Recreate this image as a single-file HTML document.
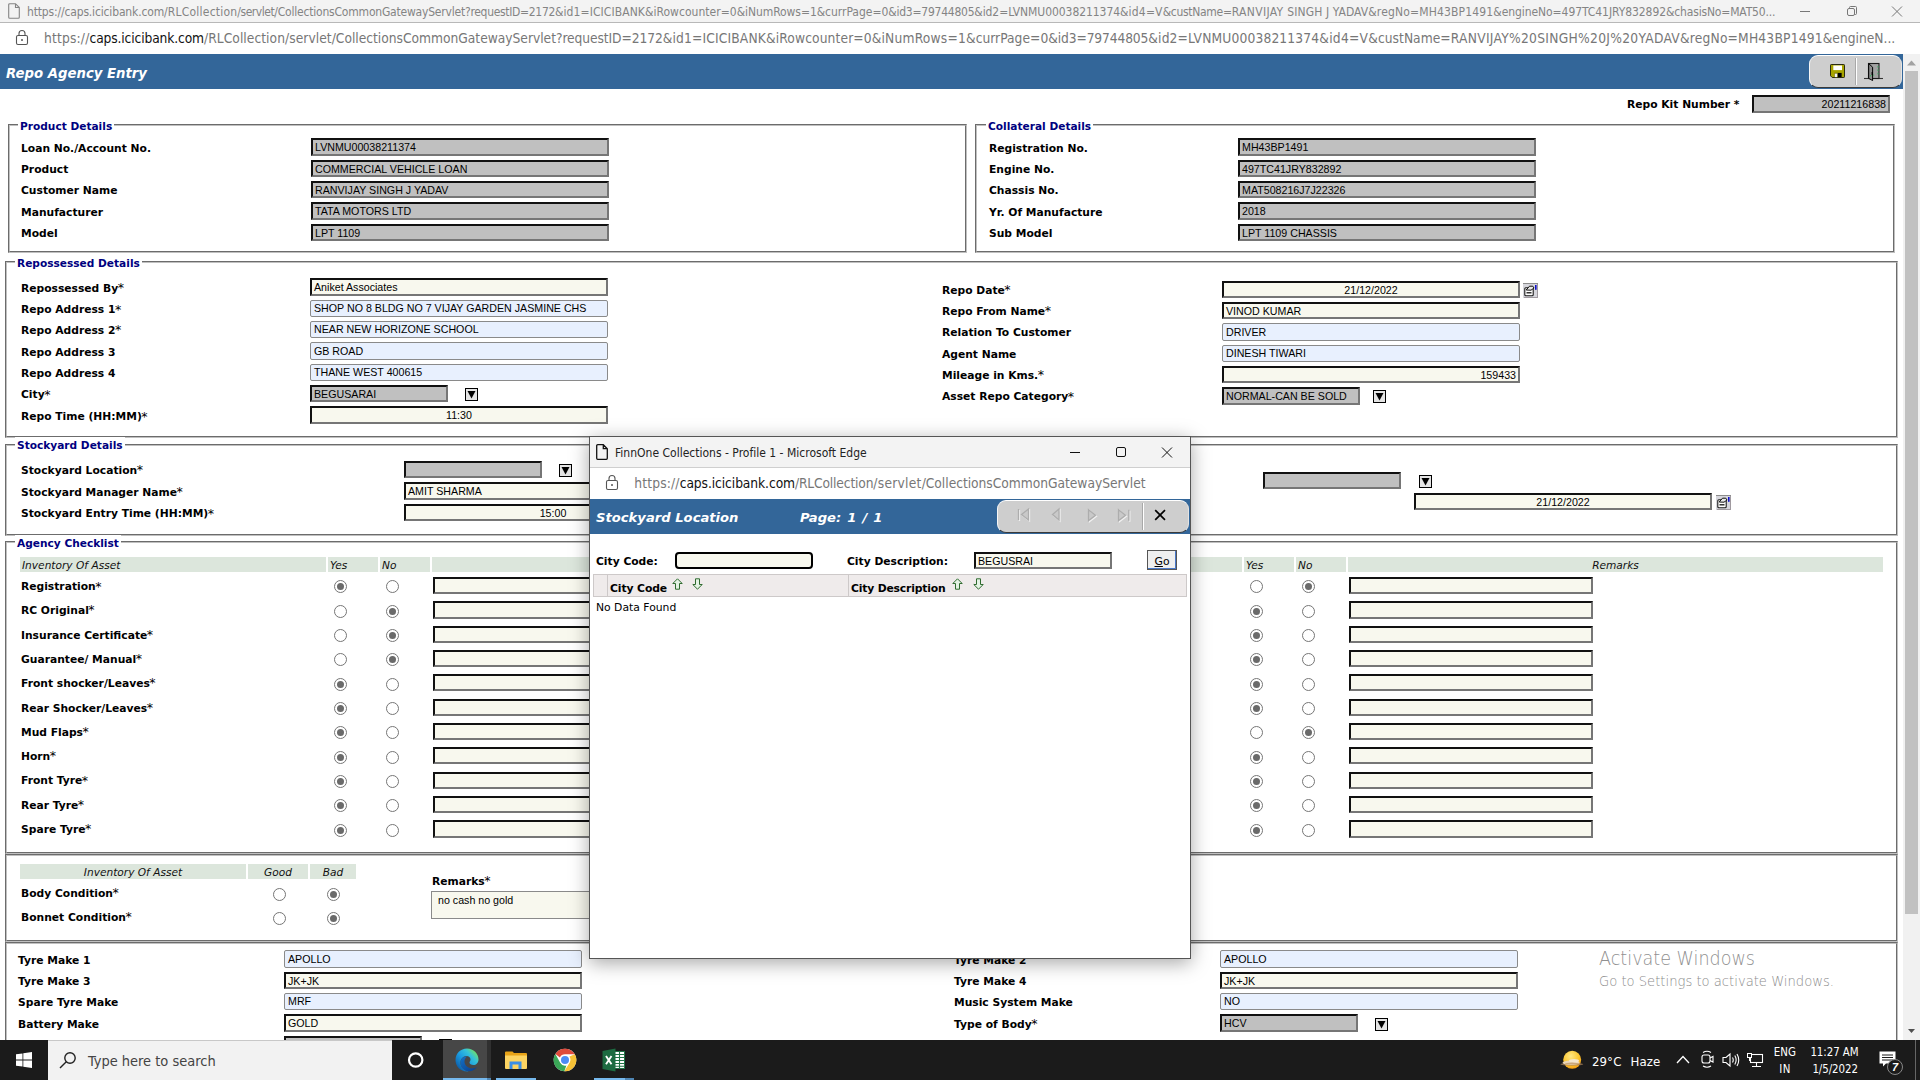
<!DOCTYPE html>
<html lang="en"><head><meta charset="utf-8"><title>Repo Agency Entry</title>
<style>
html,body{margin:0;padding:0;background:#fff}
body{width:1920px;height:1080px;overflow:hidden;position:relative;font-family:"DejaVu Sans","Liberation Sans",sans-serif}
#page{position:absolute;left:0;top:0;width:1920px;height:1040px;overflow:hidden}
.abs{position:absolute}
div{box-sizing:border-box}
.lb{position:absolute;white-space:nowrap;font:bold 10.72px/20px "DejaVu Sans",sans-serif;color:#000}
.st{font-style:normal;font-weight:normal;font-size:12.600px;line-height:0;margin-left:-.5px;position:relative;top:.6px}
.lg{position:absolute;white-space:nowrap;font:bold 10.600px/16px "DejaVu Sans",sans-serif;color:#000080;background:#fff;padding:0 2px}
.fs{position:absolute;box-sizing:content-box;border:2px groove #c0c0c0}
.hdr{position:absolute;background:#336699;color:#fff;font:italic bold 13.250px "DejaVu Sans",sans-serif;white-space:nowrap}
.pill{position:absolute;background:#cecece;border:1px solid;border-color:#fff #e4e4e4 #3a3a3a #f6f6f6;border-radius:9px}
.in{position:absolute;white-space:nowrap;overflow:hidden;font:10.670px/15px "Liberation Sans",sans-serif;color:#000;padding:0 2px}
.in.g{background:#c0c0c0;border:2px solid;border-color:#111 #767676 #767676 #111}
.in.y{background:#f8f8ee;border:2px solid;border-color:#111 #767676 #767676 #111}
.in.b{background:#e8f0fe;border:1px solid #8a8a8a;border-radius:2px;padding:0 3px;line-height:16px}
.in.f{background:#f8f8ee;border:2px solid #000;border-radius:4px}
.dd{position:absolute;width:13px;height:13px;border:1px solid #000;background:#e4e4e4}
.dd svg{display:block}
.rd{position:absolute;width:13px;height:13px;border:1px solid #767676;border-radius:50%;background:#fff}
.rd.on::after{content:"";position:absolute;left:2px;top:2px;width:7px;height:7px;border-radius:50%;background:#6a6a6a}
.hd{position:absolute;background:#dce6dc;font:italic 10.600px/15px "DejaVu Sans",sans-serif;color:#111;padding:1px 2px 0;white-space:nowrap}
.ta{position:absolute;background:#f8f8ee;border:1px solid #8a8a8a;font:10.670px/13px "Liberation Sans",sans-serif;padding:2px 6px;white-space:nowrap;overflow:hidden}
.aw1{position:absolute;font:19.500px "Liberation Sans",sans-serif;color:#a0a0a0;white-space:nowrap}
.aw2{position:absolute;font:14.200px "Liberation Sans",sans-serif;color:#a8a8a8;white-space:nowrap}
.wt{position:absolute;font:12px "Liberation Sans",sans-serif;white-space:nowrap}
.url{position:absolute;font:14.500px "Liberation Sans",sans-serif;color:#777;white-space:nowrap}
.url b{font-weight:normal;color:#111}
.pop{position:absolute;background:#fff;border:1px solid #555;box-shadow:0 4px 18px rgba(0,0,0,.35)}
.pop .hdr{}
.go{position:absolute;background:#efefef;border:1px solid #555;box-shadow:inset -1px -1px 0 #4a78c8;font:10.800px/22px "DejaVu Sans",sans-serif;text-align:center;color:#000;overflow:hidden}
.th{position:absolute;background:#efebeb;border:1px solid #cdc9c9;font:bold 10.800px/14px "DejaVu Sans",sans-serif;white-space:nowrap}
.nd{position:absolute;font:10.800px/14px "DejaVu Sans",sans-serif;white-space:nowrap}
.tb{position:absolute;color:#fff;font-family:"Liberation Sans",sans-serif;white-space:nowrap;line-height:17px}
</style></head>
<body>
<div id="page">
<div class="hdr" style="left:0;top:54px;width:1903px;height:35px"><span style="position:absolute;left:6px;top:1.5px;line-height:35px">Repo Agency Entry</span></div>
<div class="pill" style="left:1809px;top:55px;width:93px;height:33px"></div>
<div class="abs" style="left:1855px;top:58px;width:1px;height:27px;background:#a8a8a8"></div><div class="abs" style="left:1856px;top:58px;width:1px;height:27px;background:#fff"></div>
<svg class="abs" style="left:1830px;top:64px" width="15" height="14" viewBox="0 0 15 14"><path d="M.5 1.200a.7 .7 0 0 1 .7-.7H13.800a.7 .7 0 0 1 .7 .7V12.800a.7 .7 0 0 1-.7 .7H2.200L.5 11.800Z" fill="#a8a400" stroke="#2a2a10" stroke-width="1"/><rect x="3.300" y="1.500" width="8.700" height="4.600" fill="#fff"/><rect x="4.500" y="8.800" width="7.300" height="4.400" fill="#6a6800"/><rect x="8" y="9" width="3.500" height="4.200" fill="#000"/><rect x="4.800" y="9.600" width="2.400" height="3.500" fill="#f4f4f4"/></svg>
<svg class="abs" style="left:1864px;top:62px" width="19" height="19" viewBox="0 0 19 19"><path d="M0 16.500H19" stroke="#333" stroke-width="1.100"/><rect x="4.500" y="1.500" width="10.500" height="15" fill="#a2a2a2" stroke="#1a1a1a" stroke-width="1.100"/><path d="M4.700 1.600L8.600 5.200V18.500L4.700 16.400Z" fill="#8e8e8e" stroke="#000" stroke-width="1"/><path d="M8.300 10v3" stroke="#000" stroke-width="1.400"/><path d="M14 4v9" stroke="#2fae5a" stroke-width=".9" stroke-dasharray="1.600 1.800"/><circle cx="6.700" cy="13.800" r=".7" fill="#2fae5a"/><circle cx="9.700" cy="13" r=".6" fill="#2fae5a"/></svg>
<div class="lb" style="left:1627px;top:95px">Repo Kit Number *</div>
<div class="in g" style="left:1752px;top:95px;width:138px;height:18px;text-align:right;">20211216838</div>
<div class="fs" style="left:8px;top:124px;width:955px;height:125px"></div>
<div class="lg" style="left:18px;top:117.5px">Product Details</div>
<div class="lb" style="left:21px;top:138.7px;">Loan No./Account No.</div>
<div class="in g" style="left:311px;top:138px;width:298px;height:18px;">LVNMU00038211374</div>
<div class="lb" style="left:21px;top:159.5px;">Product</div>
<div class="in g" style="left:311px;top:160px;width:298px;height:17px;">COMMERCIAL VEHICLE LOAN</div>
<div class="lb" style="left:21px;top:180.5px;">Customer Name</div>
<div class="in g" style="left:311px;top:181px;width:298px;height:17px;">RANVIJAY SINGH J YADAV</div>
<div class="lb" style="left:21px;top:203.0px;">Manufacturer</div>
<div class="in g" style="left:311px;top:202px;width:298px;height:18px;">TATA MOTORS LTD</div>
<div class="lb" style="left:21px;top:224.0px;">Model</div>
<div class="in g" style="left:311px;top:224px;width:298px;height:17px;">LPT 1109</div>
<div class="fs" style="left:975px;top:124px;width:916px;height:125px"></div>
<div class="lg" style="left:986px;top:117.5px">Collateral Details</div>
<div class="lb" style="left:989px;top:138.7px;">Registration No.</div>
<div class="in g" style="left:1238px;top:138px;width:298px;height:18px;">MH43BP1491</div>
<div class="lb" style="left:989px;top:159.5px;">Engine No.</div>
<div class="in g" style="left:1238px;top:160px;width:298px;height:17px;">497TC41JRY832892</div>
<div class="lb" style="left:989px;top:180.5px;">Chassis No.</div>
<div class="in g" style="left:1238px;top:181px;width:298px;height:17px;">MAT508216J7J22326</div>
<div class="lb" style="left:989px;top:203.0px;">Yr. Of Manufacture</div>
<div class="in g" style="left:1238px;top:202px;width:298px;height:18px;">2018</div>
<div class="lb" style="left:989px;top:224.0px;">Sub Model</div>
<div class="in g" style="left:1238px;top:224px;width:298px;height:17px;">LPT 1109 CHASSIS</div>
<div class="fs" style="left:5px;top:261px;width:1889px;height:173px"></div>
<div class="lg" style="left:15px;top:254.5px">Repossessed Details</div>
<div class="lb" style="left:21px;top:278.7px;">Repossessed By<i class="st">*</i></div>
<div class="lb" style="left:21px;top:300.0px;">Repo Address 1<i class="st">*</i></div>
<div class="lb" style="left:21px;top:320.8px;">Repo Address 2<i class="st">*</i></div>
<div class="lb" style="left:21px;top:342.8px;">Repo Address 3</div>
<div class="lb" style="left:21px;top:363.7px;">Repo Address 4</div>
<div class="lb" style="left:21px;top:385.0px;">City<i class="st">*</i></div>
<div class="lb" style="left:21px;top:407.0px;">Repo Time (HH:MM)<i class="st">*</i></div>
<div class="in y" style="left:310px;top:278px;width:298px;height:18px;">Aniket Associates</div>
<div class="in b" style="left:310px;top:300px;width:298px;height:17px;line-height:15px;">SHOP NO 8 BLDG NO 7 VIJAY GARDEN JASMINE CHS</div>
<div class="in b" style="left:310px;top:321px;width:298px;height:17px;line-height:15px;">NEAR NEW HORIZONE SCHOOL</div>
<div class="in b" style="left:310px;top:342px;width:298px;height:18px;line-height:16px;">GB ROAD</div>
<div class="in b" style="left:310px;top:364px;width:298px;height:17px;line-height:15px;">THANE WEST 400615</div>
<div class="in g" style="left:310px;top:385px;width:138px;height:17px;">BEGUSARAI</div>
<div class="dd" style="left:465px;top:388px"><svg width="11" height="11" viewBox="0 0 11 11"><path d="M1.5 2 H9.5 L5.5 9.5 Z" fill="#000"/></svg></div>
<div class="in y" style="left:310px;top:406px;width:298px;height:18px;text-align:center;">11:30</div>
<div class="lb" style="left:942px;top:280.5px;">Repo Date<i class="st">*</i></div>
<div class="lb" style="left:942px;top:301.5px;">Repo From Name<i class="st">*</i></div>
<div class="lb" style="left:942px;top:322.7px;">Relation To Customer</div>
<div class="lb" style="left:942px;top:344.5px;">Agent Name</div>
<div class="lb" style="left:942px;top:365.7px;">Mileage in Kms.<i class="st">*</i></div>
<div class="lb" style="left:942px;top:387.0px;">Asset Repo Category<i class="st">*</i></div>
<div class="in y" style="left:1222px;top:281px;width:298px;height:17px;text-align:center;">21/12/2022</div>
<svg class="abs" style="left:1523px;top:283px" width="15" height="15" viewBox="0 0 15 15"><rect x="0" y="0" width="15" height="15" fill="#d6d6dc"/><path d="M0 .5H15" stroke="#8c8c8c"/><path d="M14.500 1V15M1 14.500H15" stroke="#a09aa0"/><rect x="1.800" y="4.800" width="8.400" height="8" rx="1" fill="#fff" stroke="#1a1a1a" stroke-width="1.100"/><path d="M3.200 7L6.500 3.200H9.800L11 5L8 7.200Z" fill="#e8e8e8" stroke="#111" stroke-width="1"/><path d="M3.500 9.800H8.500" stroke="#111" stroke-width="1.300"/><rect x="12" y="2" width="1.600" height="4.800" fill="#1010c8"/></svg>
<div class="in y" style="left:1222px;top:302px;width:298px;height:17px;">VINOD KUMAR</div>
<div class="in b" style="left:1222px;top:323px;width:298px;height:18px;line-height:16px;">DRIVER</div>
<div class="in b" style="left:1222px;top:345px;width:298px;height:17px;line-height:15px;">DINESH TIWARI</div>
<div class="in y" style="left:1222px;top:366px;width:298px;height:17px;text-align:right;">159433</div>
<div class="in g" style="left:1222px;top:387px;width:138px;height:18px;">NORMAL-CAN BE SOLD</div>
<div class="dd" style="left:1373px;top:390px"><svg width="11" height="11" viewBox="0 0 11 11"><path d="M1.5 2 H9.5 L5.5 9.5 Z" fill="#000"/></svg></div>
<div class="fs" style="left:5px;top:444px;width:1889px;height:88px"></div>
<div class="lg" style="left:15px;top:436.5px">Stockyard Details</div>
<div class="lb" style="left:21px;top:460.8px;">Stockyard Location<i class="st">*</i></div>
<div class="lb" style="left:21px;top:482.7px;">Stockyard Manager Name<i class="st">*</i></div>
<div class="lb" style="left:21px;top:504.1px;">Stockyard Entry Time (HH:MM)<i class="st">*</i></div>
<div class="in g" style="left:404px;top:461px;width:138px;height:17px;"></div>
<div class="dd" style="left:559px;top:464px"><svg width="11" height="11" viewBox="0 0 11 11"><path d="M1.5 2 H9.5 L5.5 9.5 Z" fill="#000"/></svg></div>
<div class="in y" style="left:404px;top:482px;width:298px;height:18px;">AMIT SHARMA</div>
<div class="in y" style="left:404px;top:504px;width:298px;height:17px;text-align:center;">15:00</div>
<div class="in g" style="left:1263px;top:472px;width:138px;height:17px;"></div>
<div class="dd" style="left:1419px;top:475px"><svg width="11" height="11" viewBox="0 0 11 11"><path d="M1.5 2 H9.5 L5.5 9.5 Z" fill="#000"/></svg></div>
<div class="in y" style="left:1414px;top:493px;width:298px;height:17px;text-align:center;">21/12/2022</div>
<svg class="abs" style="left:1716px;top:495px" width="15" height="15" viewBox="0 0 15 15"><rect x="0" y="0" width="15" height="15" fill="#d6d6dc"/><path d="M0 .5H15" stroke="#8c8c8c"/><path d="M14.500 1V15M1 14.500H15" stroke="#a09aa0"/><rect x="1.800" y="4.800" width="8.400" height="8" rx="1" fill="#fff" stroke="#1a1a1a" stroke-width="1.100"/><path d="M3.200 7L6.500 3.200H9.800L11 5L8 7.200Z" fill="#e8e8e8" stroke="#111" stroke-width="1"/><path d="M3.500 9.800H8.500" stroke="#111" stroke-width="1.300"/><rect x="12" y="2" width="1.600" height="4.800" fill="#1010c8"/></svg>
<div class="fs" style="left:5px;top:541px;width:1889px;height:309px"></div>
<div class="lg" style="left:15px;top:534.5px">Agency Checklist</div>
<div class="hd" style="left:20px;top:557px;width:306px;height:15px;text-align:left">Inventory Of Asset</div>
<div class="hd" style="left:328px;top:557px;width:50px;height:15px;text-align:left">Yes</div>
<div class="hd" style="left:380px;top:557px;width:50px;height:15px;text-align:left">No</div>
<div class="hd" style="left:432px;top:557px;width:810px;height:15px;text-align:left"></div>
<div class="hd" style="left:1244px;top:557px;width:50px;height:15px;text-align:left">Yes</div>
<div class="hd" style="left:1296px;top:557px;width:50px;height:15px;text-align:left">No</div>
<div class="hd" style="left:1348px;top:557px;width:535px;height:15px;text-align:center">Remarks</div>
<div class="lb" style="left:21px;top:577.0px;">Registration<i class="st">*</i></div>
<div class="rd on" style="left:334px;top:580px"></div>
<div class="rd" style="left:386px;top:580px"></div>
<div class="in y" style="left:433px;top:577px;width:298px;height:17px;"></div>
<div class="rd" style="left:1250px;top:580px"></div>
<div class="rd on" style="left:1302px;top:580px"></div>
<div class="in y" style="left:1349px;top:577px;width:244px;height:17px;"></div>
<div class="lb" style="left:21px;top:600.8px;">RC Original<i class="st">*</i></div>
<div class="rd" style="left:334px;top:605px"></div>
<div class="rd on" style="left:386px;top:605px"></div>
<div class="in y" style="left:433px;top:601px;width:298px;height:18px;"></div>
<div class="rd on" style="left:1250px;top:605px"></div>
<div class="rd" style="left:1302px;top:605px"></div>
<div class="in y" style="left:1349px;top:601px;width:244px;height:18px;"></div>
<div class="lb" style="left:21px;top:625.8px;">Insurance Certificate<i class="st">*</i></div>
<div class="rd" style="left:334px;top:629px"></div>
<div class="rd on" style="left:386px;top:629px"></div>
<div class="in y" style="left:433px;top:626px;width:298px;height:17px;"></div>
<div class="rd on" style="left:1250px;top:629px"></div>
<div class="rd" style="left:1302px;top:629px"></div>
<div class="in y" style="left:1349px;top:626px;width:244px;height:17px;"></div>
<div class="lb" style="left:21px;top:649.5px;">Guarantee/ Manual<i class="st">*</i></div>
<div class="rd" style="left:334px;top:653px"></div>
<div class="rd on" style="left:386px;top:653px"></div>
<div class="in y" style="left:433px;top:650px;width:298px;height:17px;"></div>
<div class="rd on" style="left:1250px;top:653px"></div>
<div class="rd" style="left:1302px;top:653px"></div>
<div class="in y" style="left:1349px;top:650px;width:244px;height:17px;"></div>
<div class="lb" style="left:21px;top:673.5px;">Front shocker/Leaves<i class="st">*</i></div>
<div class="rd on" style="left:334px;top:678px"></div>
<div class="rd" style="left:386px;top:678px"></div>
<div class="in y" style="left:433px;top:674px;width:298px;height:17px;"></div>
<div class="rd on" style="left:1250px;top:678px"></div>
<div class="rd" style="left:1302px;top:678px"></div>
<div class="in y" style="left:1349px;top:674px;width:244px;height:17px;"></div>
<div class="lb" style="left:21px;top:698.9px;">Rear Shocker/Leaves<i class="st">*</i></div>
<div class="rd on" style="left:334px;top:702px"></div>
<div class="rd" style="left:386px;top:702px"></div>
<div class="in y" style="left:433px;top:699px;width:298px;height:17px;"></div>
<div class="rd on" style="left:1250px;top:702px"></div>
<div class="rd" style="left:1302px;top:702px"></div>
<div class="in y" style="left:1349px;top:699px;width:244px;height:17px;"></div>
<div class="lb" style="left:21px;top:722.6px;">Mud Flaps<i class="st">*</i></div>
<div class="rd on" style="left:334px;top:726px"></div>
<div class="rd" style="left:386px;top:726px"></div>
<div class="in y" style="left:433px;top:723px;width:298px;height:17px;"></div>
<div class="rd" style="left:1250px;top:726px"></div>
<div class="rd on" style="left:1302px;top:726px"></div>
<div class="in y" style="left:1349px;top:723px;width:244px;height:17px;"></div>
<div class="lb" style="left:21px;top:746.8px;">Horn<i class="st">*</i></div>
<div class="rd on" style="left:334px;top:751px"></div>
<div class="rd" style="left:386px;top:751px"></div>
<div class="in y" style="left:433px;top:747px;width:298px;height:17px;"></div>
<div class="rd on" style="left:1250px;top:751px"></div>
<div class="rd" style="left:1302px;top:751px"></div>
<div class="in y" style="left:1349px;top:747px;width:244px;height:17px;"></div>
<div class="lb" style="left:21px;top:771.4px;">Front Tyre<i class="st">*</i></div>
<div class="rd on" style="left:334px;top:775px"></div>
<div class="rd" style="left:386px;top:775px"></div>
<div class="in y" style="left:433px;top:772px;width:298px;height:17px;"></div>
<div class="rd on" style="left:1250px;top:775px"></div>
<div class="rd" style="left:1302px;top:775px"></div>
<div class="in y" style="left:1349px;top:772px;width:244px;height:17px;"></div>
<div class="lb" style="left:21px;top:795.5px;">Rear Tyre<i class="st">*</i></div>
<div class="rd on" style="left:334px;top:799px"></div>
<div class="rd" style="left:386px;top:799px"></div>
<div class="in y" style="left:433px;top:796px;width:298px;height:17px;"></div>
<div class="rd on" style="left:1250px;top:799px"></div>
<div class="rd" style="left:1302px;top:799px"></div>
<div class="in y" style="left:1349px;top:796px;width:244px;height:17px;"></div>
<div class="lb" style="left:21px;top:819.5px;">Spare Tyre<i class="st">*</i></div>
<div class="rd on" style="left:334px;top:824px"></div>
<div class="rd" style="left:386px;top:824px"></div>
<div class="in y" style="left:433px;top:820px;width:298px;height:18px;"></div>
<div class="rd on" style="left:1250px;top:824px"></div>
<div class="rd" style="left:1302px;top:824px"></div>
<div class="in y" style="left:1349px;top:820px;width:244px;height:18px;"></div>
<div class="fs" style="left:5px;top:854px;width:1889px;height:84px"></div>
<div class="hd" style="left:20px;top:864px;width:226px;height:15px;text-align:center">Inventory Of Asset</div>
<div class="hd" style="left:248px;top:864px;width:60px;height:15px;text-align:center">Good</div>
<div class="hd" style="left:310px;top:864px;width:46px;height:15px;text-align:center">Bad</div>
<div class="lb" style="left:21px;top:883.8px;">Body Condition<i class="st">*</i></div>
<div class="lb" style="left:21px;top:907.7px;">Bonnet Condition<i class="st">*</i></div>
<div class="rd" style="left:273px;top:888px"></div>
<div class="rd on" style="left:327px;top:888px"></div>
<div class="rd" style="left:273px;top:912px"></div>
<div class="rd on" style="left:327px;top:912px"></div>
<div class="lb" style="left:432px;top:871.5px;">Remarks<i class="st">*</i></div>
<div class="ta" style="left:431px;top:891px;width:300px;height:28px">no cash no gold</div>
<div class="fs" style="left:5px;top:942px;width:1889px;height:116px"></div>
<div class="lb" style="left:18px;top:950.8px;">Tyre Make 1</div>
<div class="lb" style="left:18px;top:971.6px;">Tyre Make 3</div>
<div class="lb" style="left:18px;top:992.7px;">Spare Tyre Make</div>
<div class="lb" style="left:18px;top:1014.6px;">Battery Make</div>
<div class="in b" style="left:284px;top:950px;width:298px;height:18px;line-height:16px;">APOLLO</div>
<div class="in y" style="left:284px;top:972px;width:298px;height:17px;">JK+JK</div>
<div class="in b" style="left:284px;top:993px;width:298px;height:17px;line-height:15px;">MRF</div>
<div class="in y" style="left:284px;top:1014px;width:298px;height:18px;">GOLD</div>
<div class="in g" style="left:284px;top:1036px;width:138px;height:17px;"></div>
<div class="dd" style="left:439px;top:1039px"><svg width="11" height="11" viewBox="0 0 11 11"><path d="M1.5 2 H9.5 L5.5 9.5 Z" fill="#000"/></svg></div>
<div class="lb" style="left:954px;top:950.8px;">Tyre Make 2</div>
<div class="lb" style="left:954px;top:971.6px;">Tyre Make 4</div>
<div class="lb" style="left:954px;top:992.7px;">Music System Make</div>
<div class="lb" style="left:954px;top:1014.6px;">Type of Body<i class="st">*</i></div>
<div class="in b" style="left:1220px;top:950px;width:298px;height:18px;line-height:16px;">APOLLO</div>
<div class="in y" style="left:1220px;top:972px;width:298px;height:17px;">JK+JK</div>
<div class="in b" style="left:1220px;top:993px;width:298px;height:17px;line-height:15px;">NO</div>
<div class="in g" style="left:1220px;top:1014px;width:138px;height:18px;">HCV</div>
<div class="dd" style="left:1375px;top:1018px"><svg width="11" height="11" viewBox="0 0 11 11"><path d="M1.5 2 H9.5 L5.5 9.5 Z" fill="#000"/></svg></div>
<span class="abs" style="left:1599.3px;top:947px;font:200 19.800px 'DejaVu Sans',sans-serif;line-height:24px;color:#909090;white-space:pre;transform:scaleX(0.8881);transform-origin:0 0">Activate Windows</span>
<span class="abs" style="left:1599.3px;top:972px;font:200 14.600px 'DejaVu Sans',sans-serif;line-height:18px;color:#8c8c8c;white-space:pre;transform:scaleX(0.9007);transform-origin:0 0">Go to Settings to activate Windows.</span>
<div class="abs" style="left:1903px;top:54px;width:17px;height:986px;background:#f1f1f1"></div>
<div class="abs" style="left:1905px;top:71px;width:13px;height:843px;background:#c1c1c1"></div>
<svg class="abs" style="left:1907px;top:60px" width="9" height="6"><path d="M0 5.5L4.5 0.5L9 5.5Z" fill="#a3a3a3"/></svg>
<svg class="abs" style="left:1908px;top:1029px" width="7" height="4"><path d="M0 0L3.500 4L7 0Z" fill="#505050"/></svg>
</div>
<div class="abs" style="left:0;top:0;width:1920px;height:23px;background:#f3f3f3;border-bottom:1px solid #b8b8b8;box-sizing:border-box"></div>
<svg class="abs" style="left:8px;top:3px" width="12" height="16" viewBox="0 0 12 16"><path d="M1.700 .7H7.500L11.300 4.500V14.300a1 1 0 0 1-1 1H1.700a1 1 0 0 1-1-1V1.700a1 1 0 0 1 1-1Z M7.500 .7V4.500H11.300" fill="none" stroke="#858585" stroke-width="1.100"/></svg>
<span class="abs" style="left:27.0px;top:1px;font:12px 'DejaVu Sans Condensed','DejaVu Sans',sans-serif;line-height:23px;color:#848484;letter-spacing:-0.157px;white-space:pre">https://caps.icicibank.com</span>
<span class="abs" style="left:164.0px;top:1px;font:12px 'DejaVu Sans Condensed','DejaVu Sans',sans-serif;line-height:23px;color:#848484;letter-spacing:0.211px;white-space:pre">/RLCollection</span>
<span class="abs" style="left:237.3px;top:1px;font:12px 'DejaVu Sans Condensed','DejaVu Sans',sans-serif;line-height:23px;color:#848484;letter-spacing:-0.451px;white-space:pre">/servlet</span>
<span class="abs" style="left:274.3px;top:1px;font:12px 'DejaVu Sans Condensed','DejaVu Sans',sans-serif;line-height:23px;color:#848484;letter-spacing:-0.203px;white-space:pre">/CollectionsCommonGatewayServlet</span>
<span class="abs" style="left:465.0px;top:1px;font:12px 'DejaVu Sans Condensed','DejaVu Sans',sans-serif;line-height:23px;color:#848484;letter-spacing:-0.318px;white-space:pre">?requestID=2172</span>
<span class="abs" style="left:555.0px;top:1px;font:12px 'DejaVu Sans Condensed','DejaVu Sans',sans-serif;line-height:23px;color:#848484;letter-spacing:0.088px;white-space:pre">&amp;id1=ICICIBANK</span>
<span class="abs" style="left:645.0px;top:1px;font:12px 'DejaVu Sans Condensed','DejaVu Sans',sans-serif;line-height:23px;color:#848484;letter-spacing:0.031px;white-space:pre">&amp;iRowcounter=0</span>
<span class="abs" style="left:736.7px;top:1px;font:12px 'DejaVu Sans Condensed','DejaVu Sans',sans-serif;line-height:23px;color:#848484;letter-spacing:-0.072px;white-space:pre">&amp;iNumRows=1</span>
<span class="abs" style="left:816.7px;top:1px;font:12px 'DejaVu Sans Condensed','DejaVu Sans',sans-serif;line-height:23px;color:#848484;letter-spacing:-0.024px;white-space:pre">&amp;currPage=0</span>
<span class="abs" style="left:888.3px;top:1px;font:12px 'DejaVu Sans Condensed','DejaVu Sans',sans-serif;line-height:23px;color:#848484;letter-spacing:-0.242px;white-space:pre">&amp;id3=79744805</span>
<span class="abs" style="left:974.3px;top:1px;font:12px 'DejaVu Sans Condensed','DejaVu Sans',sans-serif;line-height:23px;color:#848484;letter-spacing:-0.067px;white-space:pre">&amp;id2=LVNMU00038211374</span>
<span class="abs" style="left:1120.0px;top:1px;font:12px 'DejaVu Sans Condensed','DejaVu Sans',sans-serif;line-height:23px;color:#848484;letter-spacing:0.187px;white-space:pre">&amp;id4=V</span>
<span class="abs" style="left:1162.7px;top:1px;font:12px 'DejaVu Sans Condensed','DejaVu Sans',sans-serif;line-height:23px;color:#848484;letter-spacing:-0.295px;white-space:pre">&amp;custName=</span>
<span class="abs" style="left:1231.7px;top:1px;font:12px 'DejaVu Sans Condensed','DejaVu Sans',sans-serif;line-height:23px;color:#848484;letter-spacing:0.346px;white-space:pre">RANVIJAY </span>
<span class="abs" style="left:1287.3px;top:1px;font:12px 'DejaVu Sans Condensed','DejaVu Sans',sans-serif;line-height:23px;color:#848484;letter-spacing:0.094px;white-space:pre">SINGH J YADAV</span>
<span class="abs" style="left:1368.3px;top:1px;font:12px 'DejaVu Sans Condensed','DejaVu Sans',sans-serif;line-height:23px;color:#848484;letter-spacing:0.154px;white-space:pre">&amp;regNo=MH43BP1491</span>
<span class="abs" style="left:1493.3px;top:1px;font:12px 'DejaVu Sans Condensed','DejaVu Sans',sans-serif;line-height:23px;color:#848484;letter-spacing:-0.067px;white-space:pre">&amp;engineNo=497TC41JRY832892</span>
<span class="abs" style="left:1666.0px;top:1px;font:12px 'DejaVu Sans Condensed','DejaVu Sans',sans-serif;line-height:23px;color:#848484;letter-spacing:-0.16px;white-space:pre">&amp;chasisNo=MAT50...</span>
<svg class="abs" style="left:1790px;top:0" width="130" height="23" viewBox="0 0 130 23"><path d="M10 11.5H20" stroke="#777" stroke-width="1"/><rect x="57.5" y="8.5" width="7" height="7" rx="1.5" fill="none" stroke="#777"/><path d="M59.5 8.5V7.5a1 1 0 0 1 1-1H65.5a1 1 0 0 1 1 1V13.500a1 1 0 0 1-1 1H64.5" fill="none" stroke="#777"/><path d="M102 6.500L112 16.500M112 6.500L102 16.500" stroke="#777" stroke-width="1"/></svg>
<div class="abs" style="left:0;top:23px;width:1920px;height:31px;background:#fff"></div>
<svg class="abs" style="left:15px;top:29px" width="14" height="17" viewBox="0 0 14 17"><rect x="1.5" y="6.5" width="11" height="9" rx="1.5" fill="none" stroke="#555" stroke-width="1.1"/><path d="M4 6.500V4.5a3 3 0 0 1 6 0V6.500" fill="none" stroke="#555" stroke-width="1.1"/><circle cx="7" cy="11" r="1" fill="#555"/></svg>
<span class="abs" style="left:44.0px;top:23px;font:13.7px 'DejaVu Sans Condensed','DejaVu Sans',sans-serif;line-height:30px;color:#777;letter-spacing:0.168px;white-space:pre">https://</span>
<span class="abs" style="left:89.5px;top:23px;font:13.7px 'DejaVu Sans Condensed','DejaVu Sans',sans-serif;line-height:30px;color:#111;letter-spacing:-0.127px;white-space:pre">caps.icicibank.com</span>
<span class="abs" style="left:204.0px;top:23px;font:13.7px 'DejaVu Sans Condensed','DejaVu Sans',sans-serif;line-height:30px;color:#777;letter-spacing:0.04px;white-space:pre">/RLCollection</span>
<span class="abs" style="left:285.0px;top:23px;font:13.7px 'DejaVu Sans Condensed','DejaVu Sans',sans-serif;line-height:30px;color:#777;letter-spacing:0.046px;white-space:pre">/servlet</span>
<span class="abs" style="left:331.7px;top:23px;font:13.7px 'DejaVu Sans Condensed','DejaVu Sans',sans-serif;line-height:30px;color:#777;letter-spacing:-0.019px;white-space:pre">/CollectionsCommonGatewayServlet</span>
<span class="abs" style="left:556.0px;top:23px;font:13.7px 'DejaVu Sans Condensed','DejaVu Sans',sans-serif;line-height:30px;color:#777;letter-spacing:-0.093px;white-space:pre">?requestID=2172</span>
<span class="abs" style="left:662.7px;top:23px;font:13.7px 'DejaVu Sans Condensed','DejaVu Sans',sans-serif;line-height:30px;color:#777;letter-spacing:0.146px;white-space:pre">&amp;id1=ICICIBANK</span>
<span class="abs" style="left:766.0px;top:23px;font:13.7px 'DejaVu Sans Condensed','DejaVu Sans',sans-serif;line-height:30px;color:#777;letter-spacing:0.114px;white-space:pre">&amp;iRowcounter=0</span>
<span class="abs" style="left:871.7px;top:23px;font:13.7px 'DejaVu Sans Condensed','DejaVu Sans',sans-serif;line-height:30px;color:#777;letter-spacing:0.195px;white-space:pre">&amp;iNumRows=1</span>
<span class="abs" style="left:966.0px;top:23px;font:13.7px 'DejaVu Sans Condensed','DejaVu Sans',sans-serif;line-height:30px;color:#777;letter-spacing:0.03px;white-space:pre">&amp;currPage=0</span>
<span class="abs" style="left:1048.3px;top:23px;font:13.7px 'DejaVu Sans Condensed','DejaVu Sans',sans-serif;line-height:30px;color:#777;letter-spacing:-0.129px;white-space:pre">&amp;id3=79744805</span>
<span class="abs" style="left:1148.3px;top:23px;font:13.7px 'DejaVu Sans Condensed','DejaVu Sans',sans-serif;line-height:30px;color:#777;letter-spacing:0.153px;white-space:pre">&amp;id2=LVNMU00038211374</span>
<span class="abs" style="left:1319.3px;top:23px;font:13.7px 'DejaVu Sans Condensed','DejaVu Sans',sans-serif;line-height:30px;color:#777;letter-spacing:0.263px;white-space:pre">&amp;id4=V</span>
<span class="abs" style="left:1368.3px;top:23px;font:13.7px 'DejaVu Sans Condensed','DejaVu Sans',sans-serif;line-height:30px;color:#777;letter-spacing:0.032px;white-space:pre">&amp;custName=</span>
<span class="abs" style="left:1450.7px;top:23px;font:13.7px 'DejaVu Sans Condensed','DejaVu Sans',sans-serif;line-height:30px;color:#777;letter-spacing:0.288px;white-space:pre">RANVIJAY%20SINGH%20J%20YADAV</span>
<span class="abs" style="left:1680.0px;top:23px;font:13.7px 'DejaVu Sans Condensed','DejaVu Sans',sans-serif;line-height:30px;color:#777;letter-spacing:0.183px;white-space:pre">&amp;regNo=MH43BP1491</span>
<span class="abs" style="left:1822.7px;top:23px;font:13.7px 'DejaVu Sans Condensed','DejaVu Sans',sans-serif;line-height:30px;color:#777;letter-spacing:0.003px;white-space:pre">&amp;engineN...</span>
<div class="pop" style="left:589px;top:436px;width:602px;height:523px">
<div class="abs" style="left:0;top:0;width:600px;height:31px;background:#f3f3f3"></div>
<svg class="abs" style="left:6px;top:7px" width="12" height="16" viewBox="0 0 12 16"><path d="M1.700 .7H7.300L11.300 4.700V14.300a1 1 0 0 1-1 1H1.700a1 1 0 0 1-1-1V1.700a1 1 0 0 1 1-1Z M7.300 .7V4.700H11.300" fill="none" stroke="#111" stroke-width="1.300"/></svg>
<span class="abs" style="left:25.0px;top:1px;font:12px 'DejaVu Sans Condensed','DejaVu Sans',sans-serif;line-height:31px;color:#222;letter-spacing:0.005px;white-space:pre">FinnOne Collections - Profile 1 - Microsoft Edge</span>
<svg class="abs" style="left:470px;top:0" width="130" height="31" viewBox="0 0 130 31"><path d="M10 15.500H20" stroke="#111" stroke-width="1"/><rect x="56.500" y="10.5" width="9" height="9" rx="1.5" fill="none" stroke="#111"/><path d="M102 10.5L112 20.500M112 10.500L102 20.500" stroke="#111" stroke-width="1"/></svg>
<div class="abs" style="left:0;top:30px;width:600px;height:32px;background:#fff;border-top:1px solid #cfcfcf"></div>
<svg class="abs" style="left:15px;top:37px" width="14" height="17" viewBox="0 0 14 17"><rect x="1.5" y="6.500" width="11" height="9" rx="1.5" fill="none" stroke="#555" stroke-width="1.1"/><path d="M4 6.500V4.5a3 3 0 0 1 6 0V6.500" fill="none" stroke="#555" stroke-width="1.1"/><circle cx="7" cy="11" r="1" fill="#555"/></svg>
<span class="abs" style="left:44.2px;top:31px;font:13.7px 'DejaVu Sans Condensed','DejaVu Sans',sans-serif;line-height:30px;color:#777;letter-spacing:0.168px;white-space:pre">https://</span>
<span class="abs" style="left:89.7px;top:31px;font:13.7px 'DejaVu Sans Condensed','DejaVu Sans',sans-serif;line-height:30px;color:#111;letter-spacing:-0.082px;white-space:pre">caps.icicibank.com</span>
<span class="abs" style="left:205.0px;top:31px;font:13.7px 'DejaVu Sans Condensed','DejaVu Sans',sans-serif;line-height:30px;color:#777;letter-spacing:-0.168px;white-space:pre">/RLCollection</span>
<span class="abs" style="left:283.3px;top:31px;font:13.7px 'DejaVu Sans Condensed','DejaVu Sans',sans-serif;line-height:30px;color:#777;letter-spacing:0.259px;white-space:pre">/servlet</span>
<span class="abs" style="left:331.7px;top:31px;font:13.7px 'DejaVu Sans Condensed','DejaVu Sans',sans-serif;line-height:30px;color:#777;letter-spacing:-0.035px;white-space:pre">/CollectionsCommonGatewayServlet</span>
<div class="hdr" style="left:0;top:62px;width:600px;height:35px"><span style="position:absolute;left:6px;top:1px;line-height:35px;font-size:13.15px;letter-spacing:0.003px">Stockyard Location</span><span style="position:absolute;left:210px;top:1px;line-height:35px;font-size:13.15px;word-spacing:1.48px">Page: 1 / 1</span></div>
<div class="pill" style="left:407px;top:63px;width:192px;height:33px"></div>
<svg class="abs" style="left:407px;top:63px" width="192" height="33" viewBox="0 0 192 33"><g fill="none" stroke="#f2f2f2" stroke-width="1.300" transform="translate(1,1)"><path d="M21.500 9V20"/><path d="M31.500 9L24.500 14.500L31.500 20Z"/><path d="M62 9L55.500 14.500L62 20Z"/><path d="M91.500 9.700L98.500 15.200L91.500 20.700Z"/><path d="M121.500 9.700L128.500 15.200L121.500 20.700Z"/><path d="M131.800 9.700V20.700"/></g><g fill="#c9c9c9" stroke="#adadad" stroke-width="1.300"><path d="M21.500 9V20"/><path d="M31.500 9L24.500 14.500L31.500 20Z"/><path d="M62 9L55.500 14.500L62 20Z"/><path d="M91.500 9.700L98.500 15.200L91.500 20.700Z"/><path d="M121.500 9.700L128.500 15.200L121.500 20.700Z"/><path d="M131.800 9.700V20.700"/></g><path d="M145.500 3V30" stroke="#a8a8a8"/><path d="M146.500 3V30" stroke="#fff"/><path d="M158.200 10.200L168 19.800M168 10.200L158.200 19.800" stroke="#000" stroke-width="1.700"/></svg>
<div class="lb" style="left:6px;top:115px">City Code:</div>
<div class="in f" style="left:85px;top:115px;width:138px;height:17px"></div>
<div class="lb" style="left:257px;top:115px">City Description:</div>
<div class="in y" style="left:384px;top:115px;width:138px;height:17px">BEGUSRAI</div>
<div class="go" style="left:557px;top:113px;width:30px;height:20px"><u>G</u>o</div>
<div class="th" style="left:3px;top:137px;width:15px;height:23px"></div>
<div class="th" style="left:17px;top:137px;width:242px;height:23px"><span style="position:absolute;left:2px;top:7px;letter-spacing:-0.1px">City Code</span></div>
<div class="th" style="left:258px;top:137px;width:339px;height:23px"><span style="position:absolute;left:2px;top:7px;letter-spacing:-0.18px">City Description</span></div>
<svg class="abs" style="left:82px;top:141px" width="11" height="12" viewBox="0 0 11 12"><path d="M5.5 .8L10.2 5.5H7.5V11.200H3.5V5.500H.8Z" fill="#e4f3e4" stroke="#2f6b2f" stroke-width="1"/></svg>
<svg class="abs" style="left:102px;top:141px" width="11" height="12" viewBox="0 0 11 12"><path d="M5.500 11.200L10.2 6.5H7.500V.8H3.500V6.500H.8Z" fill="#e4f3e4" stroke="#2f6b2f" stroke-width="1"/></svg>
<svg class="abs" style="left:362px;top:141px" width="11" height="12" viewBox="0 0 11 12"><path d="M5.5 .8L10.2 5.5H7.5V11.200H3.5V5.500H.8Z" fill="#e4f3e4" stroke="#2f6b2f" stroke-width="1"/></svg>
<svg class="abs" style="left:383px;top:141px" width="11" height="12" viewBox="0 0 11 12"><path d="M5.500 11.200L10.2 6.5H7.500V.8H3.500V6.500H.8Z" fill="#e4f3e4" stroke="#2f6b2f" stroke-width="1"/></svg>
<div class="nd" style="left:6px;top:164px">No Data Found</div>
</div>
<div class="abs" style="left:0;top:1040px;width:1920px;height:40px;background:#1b1b1b"></div>
<svg class="abs" style="left:16px;top:1052px" width="16" height="16" viewBox="0 0 16 16"><path d="M0 2.300L6.500 1.400V7.600H0ZM7.300 1.300L16 0V7.600H7.300ZM0 8.400H6.500V14.600L0 13.700ZM7.300 8.400H16V16L7.300 14.700Z" fill="#fff"/></svg>
<div class="abs" style="left:48px;top:1040px;width:344px;height:40px;background:#f2f2f2;border-top:1px solid #c8c8c8;box-sizing:border-box"></div>
<svg class="abs" style="left:59px;top:1051px" width="18" height="18" viewBox="0 0 18 18"><circle cx="11" cy="7" r="5.200" fill="none" stroke="#222" stroke-width="1.400"/><path d="M7.300 10.700L1 17" stroke="#222" stroke-width="1.400"/></svg>
<span class="abs" style="left:88.0px;top:1041px;font:14.5px 'DejaVu Sans Condensed','DejaVu Sans',sans-serif;line-height:40px;color:#444;letter-spacing:-0.013px;white-space:pre">Type here to search</span>
<svg class="abs" style="left:405px;top:1049px" width="22" height="22"><circle cx="10.700" cy="11" r="6.700" fill="none" stroke="#fff" stroke-width="2.200"/></svg>
<div class="abs" style="left:443px;top:1040px;width:44px;height:40px;background:#474747"></div>
<div class="abs" style="left:487px;top:1040px;width:4px;height:40px;background:#303030"></div>
<div class="abs" style="left:443px;top:1078px;width:44px;height:2px;background:#76b9ed"></div>
<div class="abs" style="left:487px;top:1078px;width:4px;height:2px;background:#4f86b4"></div>
<svg class="abs" style="left:455px;top:1048px" width="24" height="24" viewBox="0 0 24 24"><defs><linearGradient id="eg1" x1="0.100" y1="0.900" x2="0.900" y2="0.150"><stop offset="0" stop-color="#0c59a4"/><stop offset=".45" stop-color="#1b9de2"/><stop offset=".75" stop-color="#35c1d8"/><stop offset="1" stop-color="#6ee06a"/></linearGradient><linearGradient id="eg2" x1="0" y1="0" x2="1" y2="1"><stop offset="0" stop-color="#1272c8"/><stop offset="1" stop-color="#0b3a86"/></linearGradient></defs><path d="M12 .5C18.500 .5 23.500 5.500 23.500 11.500C23.500 15 21 17 18.500 17C16 17 14.500 16 14.500 14.500C14.500 13.500 15.500 13 15.500 11.500C15.500 9.500 13.800 8 11.500 8C8 8 5.500 11 5.500 14.500C5.500 19 9 22.500 13.500 23.300C13 23.450 12.500 23.500 12 23.500C5.500 23.500 .5 18.500 .5 12C.5 5.500 5.500 .5 12 .5Z" fill="url(#eg1)"/><path d="M5.500 14.500C5.500 19 9 23 14 23.300C17.500 23.300 20.500 21.500 22.300 18.800C20.800 19.800 19 20.300 17.300 20.300C12.500 20.300 9.500 17 9.500 13.500C9.500 11.500 10.500 9.500 12 8.500C8.500 8 5.500 11 5.500 14.500Z" fill="url(#eg2)"/></svg>
<div class="abs" style="left:496px;top:1078px;width:40px;height:2px;background:#76b9ed"></div>
<svg class="abs" style="left:504px;top:1050px" width="24" height="20" viewBox="0 0 24 20"><path d="M1 2.500a1 1 0 0 1 1-1H8.500l1.500 1.500H22a1 1 0 0 1 1 1V18H1Z" fill="#e8a317"/><path d="M1 5.500H23V18a1 1 0 0 1-1 1H2a1 1 0 0 1-1-1Z" fill="#fcd462"/><path d="M5.500 19V11.500H17.500V19H14.500V14.500H8.500V19Z" fill="#3a8ee6"/></svg>
<svg class="abs" style="left:553px;top:1048px" width="24" height="24" viewBox="0 0 24 24"><circle cx="12" cy="12" r="11.300" fill="#fff"/><path d="M12 .7A11.300 11.300 0 0 1 21.790 6.350H12A5.650 5.650 0 0 0 6.900 9.600L2.400 5.900A11.300 11.300 0 0 1 12 .7Z" fill="#e04a3b"/><path d="M21.790 6.350A11.300 11.300 0 0 1 11.300 23.280L16.400 14.900A5.650 5.650 0 0 0 16.400 8.600Z" fill="#f7c236"/><path d="M2.400 5.900L7.200 14.700A5.650 5.650 0 0 0 13.400 17.450L11.300 23.280A11.300 11.300 0 0 1 2.400 5.900Z" fill="#3aa757"/><circle cx="12" cy="12" r="5.100" fill="#fff"/><circle cx="12" cy="12" r="4" fill="#4c8bf5"/></svg>
<div class="abs" style="left:594px;top:1078px;width:31px;height:2px;background:#76b9ed"></div>
<div class="abs" style="left:625px;top:1078px;width:9px;height:2px;background:#4f86b4"></div>
<svg class="abs" style="left:602px;top:1048px" width="24" height="24" viewBox="0 0 24 24"><rect x="11.500" y="3.500" width="11" height="17" fill="#fff" stroke="#217346" stroke-width="1"/><path d="M13 6.500h9M13 9.500h9M13 12.500h9M13 15.500h9M13 18.300h9M17.500 4v16" stroke="#217346" stroke-width="1.100"/><path d="M.5 3L13.500 .5V23.500L.5 21Z" fill="#1d6b41"/><path d="M4 8L9.500 16.200M9.500 8L4 16.200" stroke="#fff" stroke-width="1.900"/></svg>
<svg class="abs" style="left:1559px;top:1048px" width="26" height="24" viewBox="0 0 26 24"><defs><radialGradient id="sun" cx=".42" cy=".3" r=".75"><stop offset="0" stop-color="#ffe884"/><stop offset=".6" stop-color="#fcc62e"/><stop offset="1" stop-color="#f39a12"/></radialGradient></defs><circle cx="13.200" cy="11.800" r="9" fill="url(#sun)"/><ellipse cx="12.800" cy="16.300" rx="11.500" ry="1.500" fill="#a8825a" opacity=".75"/><ellipse cx="12" cy="14.800" rx="8.500" ry="2.200" fill="#ead6b8"/><ellipse cx="15" cy="12.800" rx="5" ry="1.900" fill="#f3e6cf"/><ellipse cx="13" cy="15.600" rx="7" ry="1" fill="#c9a77c"/></svg>
<span class="abs" style="left:1591.9px;top:1053px;font:13.1px 'DejaVu Sans Condensed','DejaVu Sans',sans-serif;line-height:17px;color:#fff;letter-spacing:0.123px;white-space:pre">29°C</span>
<span class="abs" style="left:1630.5px;top:1053px;font:13.1px 'DejaVu Sans Condensed','DejaVu Sans',sans-serif;line-height:17px;color:#fff;letter-spacing:0.121px;white-space:pre">Haze</span>
<svg class="abs" style="left:1676px;top:1055px" width="14" height="9"><path d="M1 8L7 1.500L13 8" fill="none" stroke="#fff" stroke-width="1.300"/></svg>
<svg class="abs" style="left:1700px;top:1050px" width="15" height="19" viewBox="0 0 15 19"><rect x="2" y="5" width="8" height="8" rx="2" fill="none" stroke="#fff" stroke-width="1.100"/><path d="M10 8l3-1.500v5.500L10 10.500" fill="none" stroke="#fff" stroke-width="1.100"/><path d="M3 2.500Q7 0 11 2.500M3 16Q7 18.500 11 16" fill="none" stroke="#fff" stroke-width="1.100"/></svg>
<svg class="abs" style="left:1722px;top:1052px" width="18" height="16" viewBox="0 0 18 16"><path d="M1 5.500H4L8 2V14L4 10.500H1Z" fill="none" stroke="#fff" stroke-width="1.100"/><path d="M10.500 5.500Q12 8 10.500 10.500M12.800 3.500Q15.500 8 12.800 12.500M15 2Q18.500 8 15 14" fill="none" stroke="#fff" stroke-width="1.100"/></svg>
<svg class="abs" style="left:1747px;top:1053px" width="17" height="15" viewBox="0 0 17 15"><rect x="3.500" y="1.500" width="12" height="8" fill="none" stroke="#fff" stroke-width="1.100"/><path d="M9.500 9.500V13M5 13.500H14" stroke="#fff" stroke-width="1.100"/><rect x=".5" y=".5" width="4" height="4" fill="#1b1b1b" stroke="#fff" stroke-width="1"/><path d="M2.500 4.500V8" stroke="#fff"/></svg>
<span class="abs" style="left:1773.7px;top:1044px;font:11.4px 'DejaVu Sans Condensed','DejaVu Sans',sans-serif;line-height:17px;color:#fff;letter-spacing:0.135px;white-space:pre">ENG</span>
<span class="abs" style="left:1779.2px;top:1061px;font:11.4px 'DejaVu Sans Condensed','DejaVu Sans',sans-serif;line-height:17px;color:#fff;letter-spacing:0.656px;white-space:pre">IN</span>
<span class="abs" style="left:1810.4px;top:1044px;font:11.4px 'DejaVu Sans Condensed','DejaVu Sans',sans-serif;line-height:17px;color:#fff;letter-spacing:-0.055px;white-space:pre">11:27 AM</span>
<span class="abs" style="left:1812.4px;top:1061px;font:11.4px 'DejaVu Sans Condensed','DejaVu Sans',sans-serif;line-height:17px;color:#fff;letter-spacing:-0.054px;white-space:pre">1/5/2022</span>
<svg class="abs" style="left:1878px;top:1050px" width="26" height="26" viewBox="0 0 26 26"><path d="M1.500 1.500H17.500V13.500H8L5 16.500V13.500H1.500Z" fill="#fff"/><path d="M4 5H15M4 7.500H15M4 10H15" stroke="#1b1b1b" stroke-width="1"/><circle cx="17" cy="17" r="7.500" fill="#1b1b1b" stroke="#888" stroke-width="1"/><text x="17" y="21" text-anchor="middle" font-family="Liberation Sans,sans-serif" font-size="11" font-weight="bold" font-style="italic" fill="#fff">7</text></svg>
<div class="abs" style="left:1915px;top:1040px;width:1px;height:40px;background:#666"></div>
</body></html>
